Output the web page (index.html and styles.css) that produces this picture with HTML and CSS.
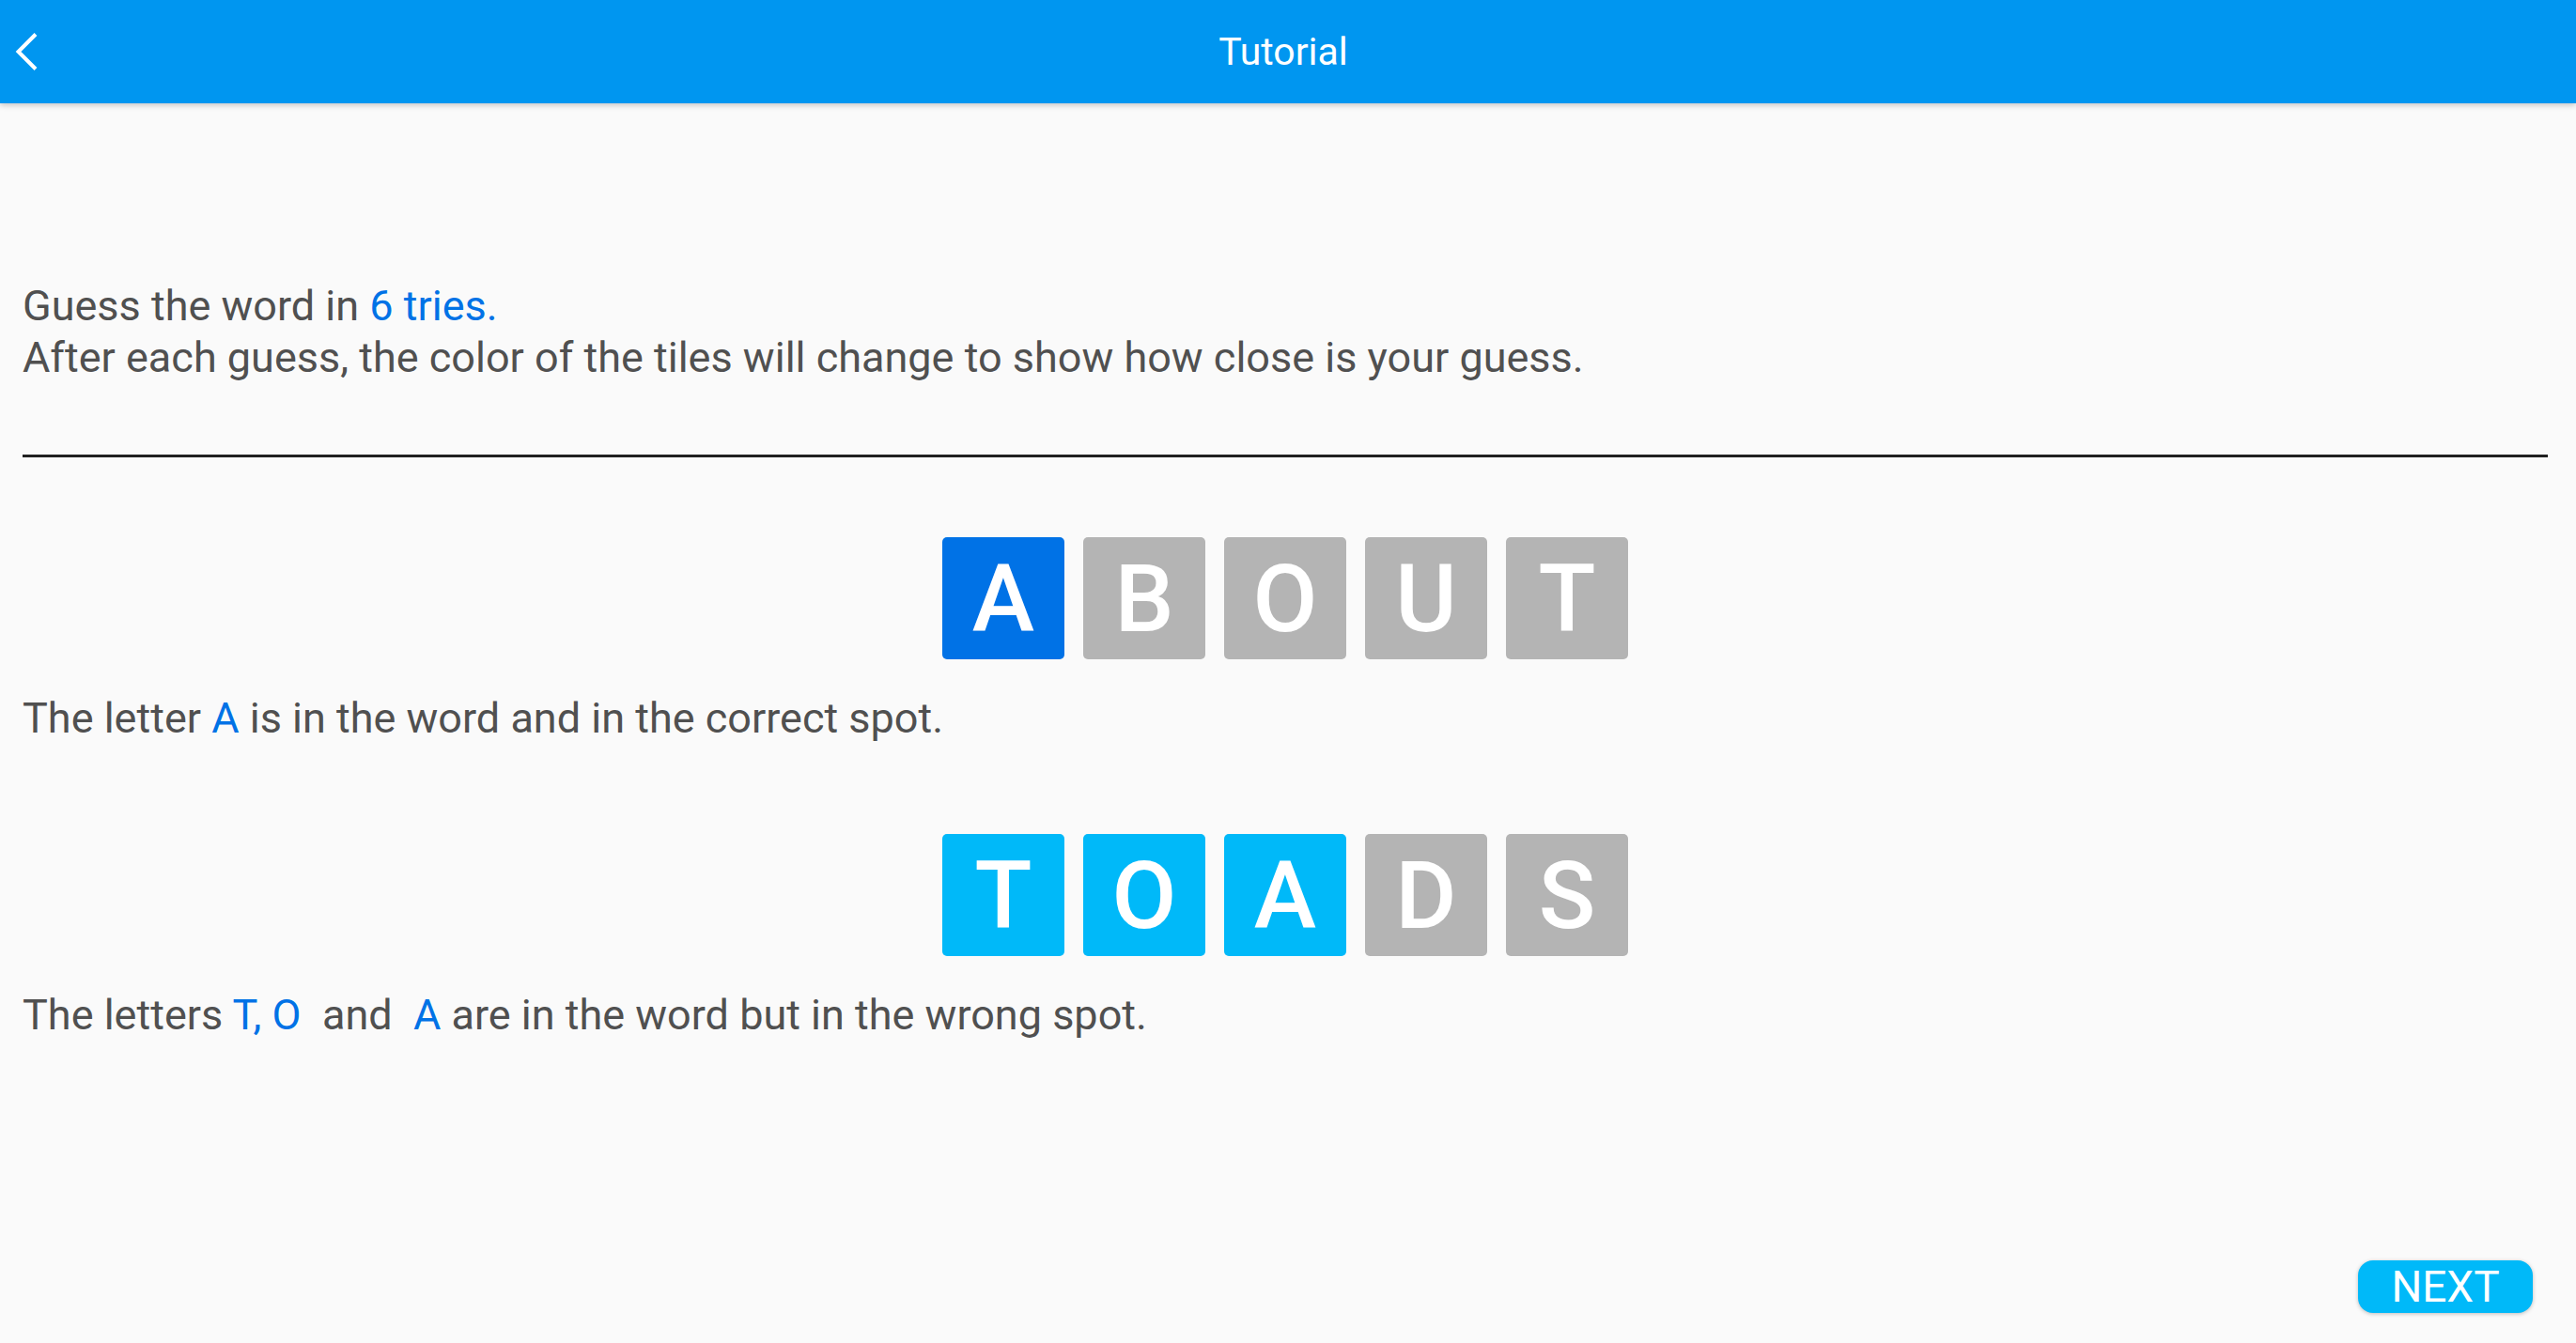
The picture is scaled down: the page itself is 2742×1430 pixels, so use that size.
FILE: index.html
```html
<!DOCTYPE html>
<html lang="en">
<head>
  <meta charset="UTF-8" />
  <meta name="viewport" content="width=device-width, initial-scale=1.0" />
  <title>Tutorial</title>
  <link rel="stylesheet" href="styles.css">
</head>
<body>
  <header class="app-bar">
    <button class="back" aria-label="Back">
      <svg width="24" height="40" viewBox="0 0 24 40">
        <polyline points="22,1.5 3.5,20 22,38.5" fill="none" stroke="#fff" stroke-width="4" />
      </svg>
    </button>
    <h1>Tutorial</h1>
    <span></span>
  </header>

  <main>
    <section class="intro">
      <p>Guess the word in <span class="hl">6 tries.</span></p>
      <p>After each guess, the color of the tiles will change to show how close is your guess.</p>
    </section>

    <div class="divider"></div>

    <section class="example first">
      <div class="tiles">
        <div class="tile correct">A</div>
        <div class="tile">B</div>
        <div class="tile">O</div>
        <div class="tile">U</div>
        <div class="tile">T</div>
      </div>
      <p class="caption">The letter <span class="hl">A</span> is in the word and in the correct spot.</p>
    </section>

    <section class="example">
      <div class="tiles">
        <div class="tile present">T</div>
        <div class="tile present">O</div>
        <div class="tile present">A</div>
        <div class="tile">D</div>
        <div class="tile">S</div>
      </div>
      <p class="caption">The letters <span class="hl">T, O</span>&nbsp; and &nbsp;<span class="hl">A</span> are in the word but in the wrong spot.</p>
    </section>
  </main>

  <footer>
    <button class="next">NEXT</button>
  </footer>
</body>
</html>
```

FILE: styles.css
```css
:root {
  --bar-bg: #0096f0;
  --page-bg: #fafafa;
  --text-color: #505050;
  --blue: #0072e6;
  --cyan: #00b9f9;
  --gray: #b4b4b4;
}

body {
  font-family: Roboto, "Noto Sans", sans-serif;
  margin: 0;
  height: 100vh;
  display: flex;
  flex-direction: column;
  background-color: var(--page-bg);
  color: var(--text-color);
}

.app-bar {
  height: 110px;
  flex-shrink: 0;
  display: grid;
  grid-template-columns: 1fr auto 1fr;
  align-items: center;
  background-color: var(--bar-bg);
  box-shadow: 0 2px 6px rgba(0, 0, 0, 0.22);
  position: relative;
  z-index: 1;
}
.app-bar h1 {
  margin: 0 10px 0 0;
  font-size: 41px;
  font-weight: 400;
  color: #fff;
}
.back {
  justify-self: start;
  margin-left: 16px;
  padding: 0;
  border: none;
  background: none;
  display: flex;
  cursor: pointer;
}

main {
  flex: 1;
  padding: 188px 30px 0 24px;
}
p {
  margin: 0;
  font-size: 45px;
  line-height: 55px;
}
.hl {
  color: var(--blue);
}

.divider {
  height: 3px;
  margin-top: 76px;
  background-color: #212121;
}

.example {
  margin-top: 96px;
}
.example.first {
  margin-top: 85px;
}
.tiles {
  display: flex;
  justify-content: center;
  gap: 20px;
}
.tile {
  width: 130px;
  height: 130px;
  border-radius: 5px;
  display: flex;
  align-items: center;
  justify-content: center;
  background-color: var(--gray);
  color: #fff;
  font-size: 100px;
  font-weight: 500;
}
.tile.correct {
  background-color: var(--blue);
}
.tile.present {
  background-color: var(--cyan);
}
.caption {
  margin-top: 35px;
}

footer {
  display: flex;
  justify-content: flex-end;
  padding: 0 46px 32px 0;
}
.next {
  width: 186px;
  height: 56px;
  padding: 0;
  border: none;
  border-radius: 16px;
  background-color: var(--cyan);
  color: #fff;
  font-family: Roboto, sans-serif;
  font-size: 46px;
  line-height: 56px;
  box-shadow: 0 1px 4px rgba(0, 0, 0, 0.25);
  cursor: pointer;
}
```
